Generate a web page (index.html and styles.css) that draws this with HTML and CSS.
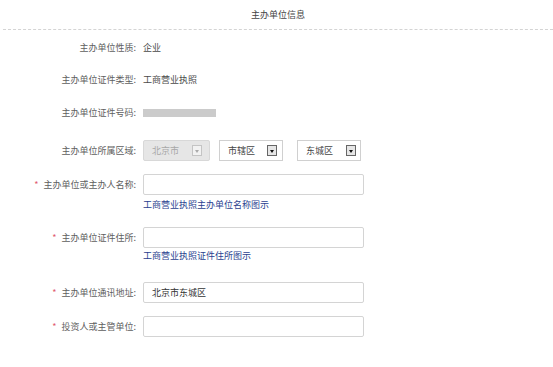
FILE: index.html
```html
<!DOCTYPE html>
<html lang="zh">
<head>
<meta charset="utf-8">
<link rel="stylesheet" href="styles.css">
</head>
<body>
<div class="page">
  <div class="title">主办单位信息</div>

  <div class="row r1"><div class="label">主办单位性质:</div><div class="val">企业</div></div>
  <div class="row r2"><div class="label">主办单位证件类型:</div><div class="val">工商营业执照</div></div>
  <div class="row r3"><div class="label">主办单位证件号码:</div><div class="val"><span class="blur"></span></div></div>

  <div class="row r4"><div class="label">主办单位所属区域:</div>
    <div class="val selects">
      <div class="sel disabled"><span class="txt">北京市</span><span class="arr"></span></div>
      <div class="sel s2"><span class="txt">市辖区</span><span class="arr"></span></div>
      <div class="sel s3"><span class="txt">东城区</span><span class="arr"></span></div>
    </div>
  </div>

  <div class="row field r5"><div class="label"><span class="req">*</span>主办单位或主办人名称:</div>
    <div class="input"></div>
    <a class="link">工商营业执照主办单位名称图示</a>
  </div>

  <div class="row field r6"><div class="label"><span class="req">*</span>主办单位证件住所:</div>
    <div class="input"></div>
    <a class="link">工商营业执照证件住所图示</a>
  </div>

  <div class="row field r7"><div class="label"><span class="req">*</span>主办单位通讯地址:</div>
    <div class="input"><span class="itext">北京市东城区</span></div>
  </div>

  <div class="row field r8"><div class="label"><span class="req">*</span>投资人或主管单位:</div>
    <div class="input"></div>
  </div>
</div>
</body>
</html>
```

FILE: styles.css
```css
html, body {
  margin: 0;
  padding: 0;
  background: #fff;
}
body {
  font-family: "Noto Sans CJK SC", "Liberation Sans", sans-serif;
  font-size: 9px;
  color: #5a5a5a;
}
.page {
  width: 553px;
}
.title {
  height: 29px;
  line-height: 29px;
  margin-left: 3px;
  text-align: center;
  border-bottom: 1px dashed #d4d4d4;
  color: #444;
}
.row {
  display: grid;
  grid-template-columns: 136px 221px;
  column-gap: 7px;
  align-items: center;
  height: 20px;
}
.label {
  text-align: right;
  white-space: nowrap;
  line-height: 20px;
  color: #5e5e5e;
}
.val {
  line-height: 20px;
  white-space: nowrap;
  color: #4a4a4a;
}
.r1 { margin-top: 8px; }
.r2 { margin-top: 12px; }
.r3 { margin-top: 13px; }
.r4 { margin-top: 17px; height: 21px; }
.blur {
  display: inline-block;
  width: 73px;
  height: 8px;
  background: #cbcbcb;
  vertical-align: middle;
  margin-top: -2px;
}
.selects {
  display: flex;
}
.sel {
  height: 21px;
  box-sizing: border-box;
  border: 1px solid #d0d0d0;
  background: #fff;
  display: flex;
  align-items: center;
  justify-content: space-between;
  padding: 0 4px 0 8px;
  color: #444;
}
.sel.disabled {
  width: 67px;
  background: #e6e6e6;
  border-color: #d8d8d8;
  color: #a8a8a8;
  border-radius: 2px;
  padding-right: 7px;
}
.sel.s2 { width: 64px; margin-left: 9px; padding-right: 5px; }
.sel.s3 { width: 64px; margin-left: 14px; }
.arr {
  width: 10px;
  height: 11px;
  box-sizing: border-box;
  border: 1px solid #666;
  background: #e6e6e6;
  position: relative;
}
.arr::after {
  content: "";
  position: absolute;
  left: 2px;
  top: 3.5px;
  border-left: 2px solid transparent;
  border-right: 2px solid transparent;
  border-top: 3px solid #111;
}
.disabled .arr {
  border-color: #c4c4c4;
  background: #f2f2f2;
}
.disabled .arr::after {
  border-top-color: #aaa;
}
.field {
  height: auto;
  grid-template-rows: 21px auto;
}
.input {
  height: 21px;
  box-sizing: border-box;
  border: 1px solid #d4d4d4;
  border-radius: 2px;
  background: #fff;
  display: flex;
  align-items: center;
  padding-left: 8px;
  color: #333;
}
.link {
  grid-column: 2;
  color: #2a3f8f;
  line-height: 12px;
  white-space: nowrap;
}
.r5 { margin-top: 13px; }
.r5 .link { margin-top: 4px; }
.r6 { margin-top: 16px; }
.r6 .link { margin-top: 2px; }
.r7 { margin-top: 20px; }
.r8 { margin-top: 13px; }
.req {
  color: #e05a70;
  margin-right: 5px;
}
```
